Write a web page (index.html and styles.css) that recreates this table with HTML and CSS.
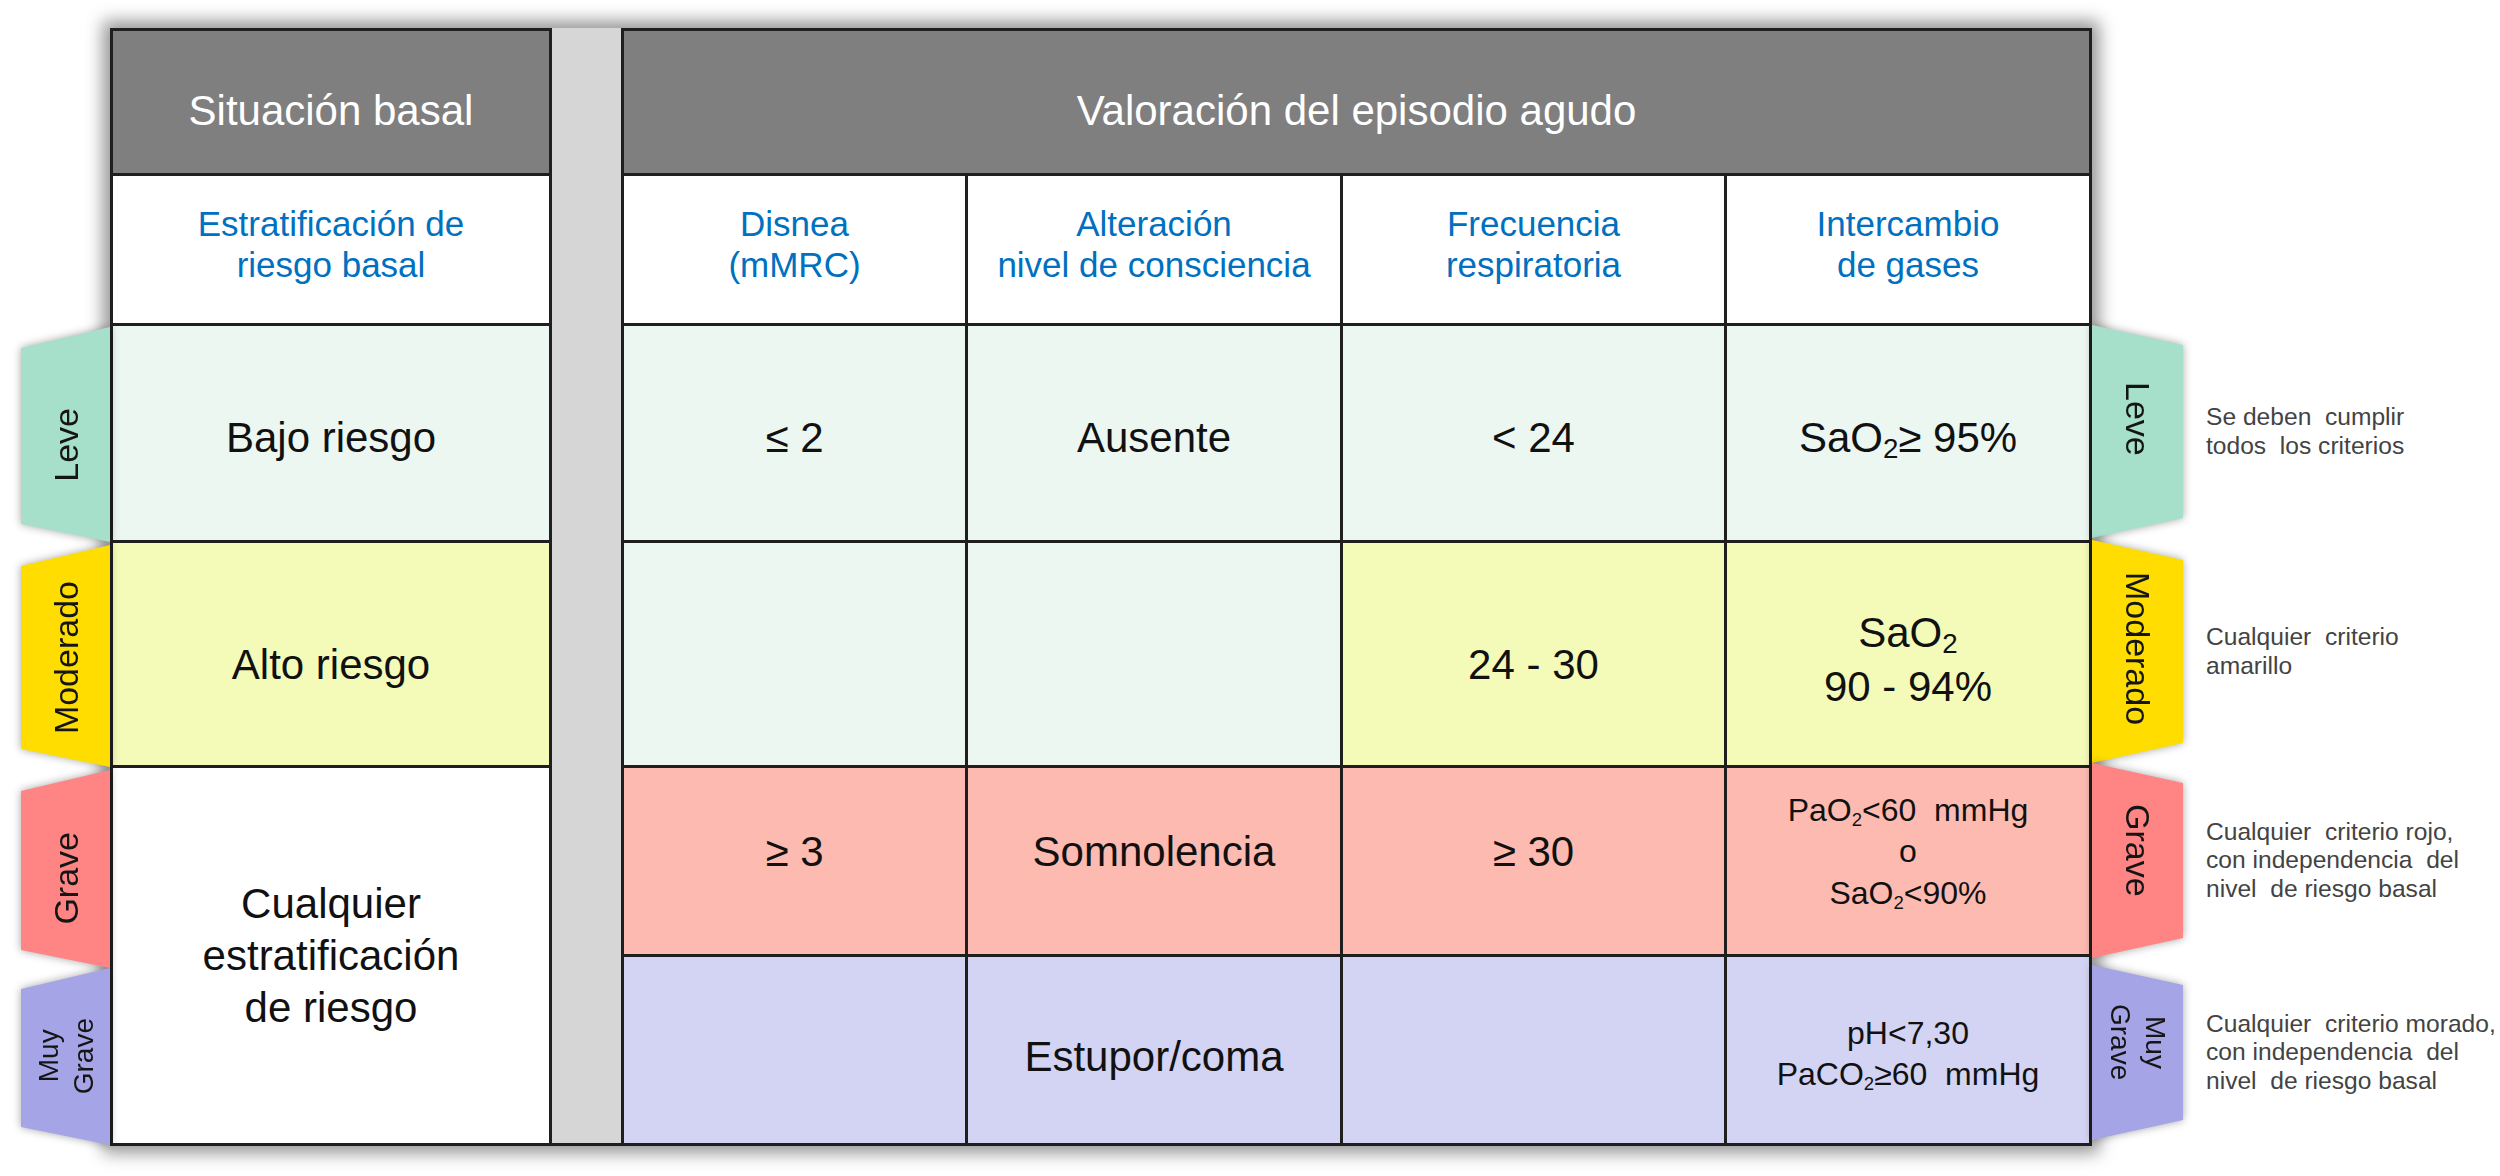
FILE: index.html
```html
<!DOCTYPE html>
<html lang="es">
<head>
<meta charset="utf-8">
<title>Valoración del episodio agudo</title>
<link rel="stylesheet" href="styles.css">
</head>
<body>
<div class="page">
  <div class="tabs-left">
    <div class="ltab ltab-leve"><span class="ltext">Leve</span></div>
    <div class="ltab ltab-mod"><span class="ltext">Moderado</span></div>
    <div class="ltab ltab-grave"><span class="ltext">Grave</span></div>
    <div class="ltab ltab-muy"><span class="ltext small">Muy<br>Grave</span></div>
  </div>

  <div class="table">
    <div class="cell head"><span>Situación basal</span></div>
    <div class="sep"></div>
    <div class="cell head span-val"><span>Valoración del episodio agudo</span></div>

    <div class="cell sub"><span>Estratificación de<br>riesgo basal</span></div>
    <div class="cell sub"><span>Disnea<br>(mMRC)</span></div>
    <div class="cell sub"><span>Alteración<br>nivel de consciencia</span></div>
    <div class="cell sub"><span>Frecuencia<br>respiratoria</span></div>
    <div class="cell sub"><span>Intercambio<br>de gases</span></div>

    <div class="cell bg-leve r1"><span>Bajo riesgo</span></div>
    <div class="cell bg-leve r1"><span>≤ 2</span></div>
    <div class="cell bg-leve r1"><span>Ausente</span></div>
    <div class="cell bg-leve r1"><span>&lt; 24</span></div>
    <div class="cell bg-leve r1"><span>SaO<sub>2</sub>≥ 95%</span></div>

    <div class="cell bg-mod r2"><span>Alto riesgo</span></div>
    <div class="cell bg-leve"></div>
    <div class="cell bg-leve"></div>
    <div class="cell bg-mod r2"><span>24 - 30</span></div>
    <div class="cell bg-mod two inter-mod"><span>SaO<sub>2</sub><br>90 - 94%</span></div>

    <div class="cell bg-white merged"><span>Cualquier<br>estratificación<br>de riesgo</span></div>
    <div class="cell bg-grave r3"><span>≥ 3</span></div>
    <div class="cell bg-grave r3"><span>Somnolencia</span></div>
    <div class="cell bg-grave r3"><span>≥ 30</span></div>
    <div class="cell bg-grave r3 gas"><span>PaO<sub>2</sub>&lt;60&nbsp; mmHg<br>o<br>SaO<sub>2</sub>&lt;90%</span></div>

    <div class="cell bg-muy"></div>
    <div class="cell bg-muy r4"><span>Estupor/coma</span></div>
    <div class="cell bg-muy"></div>
    <div class="cell bg-muy gas inter-muy"><span>pH&lt;7,30<br>PaCO<sub>2</sub>≥60&nbsp; mmHg</span></div>
  </div>

  <div class="side">
    <div class="side-row row-leve">
      <div class="rwrap"><div class="rtab rtab-leve"><span class="rtext">Leve</span></div></div>
      <div class="note">Se deben&nbsp; cumplir<br>todos&nbsp; los criterios</div>
    </div>
    <div class="side-row row-mod">
      <div class="rwrap"><div class="rtab rtab-mod"><span class="rtext">Moderado</span></div></div>
      <div class="note">Cualquier&nbsp; criterio<br>amarillo</div>
    </div>
    <div class="side-row row-grave">
      <div class="rwrap"><div class="rtab rtab-grave"><span class="rtext">Grave</span></div></div>
      <div class="note">Cualquier&nbsp; criterio rojo,<br>con independencia&nbsp; del<br>nivel&nbsp; de riesgo basal</div>
    </div>
    <div class="side-row row-muy">
      <div class="rwrap"><div class="rtab rtab-muy"><span class="rtext small">Muy<br>Grave</span></div></div>
      <div class="note">Cualquier&nbsp; criterio morado,<br>con independencia&nbsp; del<br>nivel&nbsp; de riesgo basal</div>
    </div>
  </div>
</div>
</body>
</html>
```

FILE: styles.css
```css
* { box-sizing: border-box; }

html, body {
  margin: 0;
  padding: 0;
  background: #ffffff;
  overflow: hidden;
}

body {
  font-family: "Liberation Sans", Arial, sans-serif;
  color: #111111;
}

.page {
  display: flex;
  align-items: flex-start;
  width: 2500px;
  height: 1176px;
  padding: 28px 0 0 21px;
}

/* ---------- left tabs ---------- */
.tabs-left {
  display: flex;
  flex-direction: column;
  width: 89px;
  flex: none;
  filter: drop-shadow(0 0 4px rgba(0, 0, 0, 0.35));
}

.ltab {
  display: flex;
  align-items: center;
  justify-content: center;
  width: 89px;
  clip-path: polygon(0 21px, 100% 0, 100% 100%, 0 calc(100% - 18px));
}

.ltab-leve  { margin-top: 299px; height: 215px; background: #a7e0ca; padding-top: 20px; }
.ltab-mod   { margin-top: 3px;   height: 222px; background: #ffdd00; padding-top: 4px; }
.ltab-grave { margin-top: 3px;   height: 198px; background: #ff8585; padding-top: 18px; }
.ltab-muy   { margin-top: 0;     height: 177px; background: #a4a4e6; }

.ltext {
  writing-mode: vertical-rl;
  transform: rotate(180deg);
  font-size: 34px;
  line-height: 36px;
  text-align: center;
  color: #151515;
  white-space: nowrap;
}

.ltext.small,
.rtext.small {
  font-size: 28px;
  line-height: 35px;
}

/* ---------- table ---------- */
.table {
  flex: none;
  display: grid;
  grid-template-columns: 436px 69px 341px 372px 381px 362px;
  grid-template-rows: 142px 147px 214px 222px 186px 186px;
  gap: 3px;
  padding: 3px;
  background: #1f1f1f;
  box-shadow: 0 0 16px 7px rgba(0, 0, 0, 0.42);
}

.sep {
  grid-column: 2;
  grid-row: 1 / -1;
  background: #d6d6d6;
  margin-top: -3px;
}

.cell {
  display: flex;
  align-items: center;
  justify-content: center;
  text-align: center;
  font-size: 42px;
  line-height: 1.15;
  background: #ffffff;
  white-space: nowrap;
}

.head {
  background: #7f7f7f;
  color: #ffffff;
  padding-top: 18px;
}

.span-val { grid-column: 3 / 7; }

.sub {
  color: #0070c0;
  font-size: 35px;
  line-height: 41px;
  padding-bottom: 12px;
}

.bg-leve  { background: #ecf7f1; }
.bg-mod   { background: #f4fbb9; }
.bg-grave { background: #fdbab0; }
.bg-muy   { background: #d3d3f3; }
.bg-white { background: #ffffff; }

.r1 { padding-top: 10px; }
.r2 { padding-top: 22px; }
.r3 { padding-bottom: 18px; }
.r4 { padding-top: 14px; }

.two { line-height: 54px; }
.inter-mod { padding-top: 11px; }

.merged {
  grid-row: span 2;
  line-height: 52px;
}

.gas {
  font-size: 32px;
  line-height: 41.5px;
}
.inter-muy { padding-top: 8px; }

sub {
  font-size: 0.66em;
  vertical-align: -0.22em;
  line-height: 0;
}

.gas sub {
  font-size: 0.58em;
  vertical-align: -0.28em;
}

/* ---------- right side ---------- */
.side {
  flex: none;
  display: flex;
  flex-direction: column;
}

.side-row {
  display: flex;
  align-items: center;
}

.row-leve  { margin-top: 297px; height: 213px; }
.row-mod   { margin-top: 2px;   height: 223px; }
.row-grave { margin-top: 0;     height: 195px; }
.row-muy   { margin-top: 7px;   height: 175px; }

.rwrap {
  flex: none;
  width: 91px;
  height: 100%;
  filter: drop-shadow(0 0 4px rgba(0, 0, 0, 0.35));
}

.rtab {
  display: flex;
  align-items: center;
  justify-content: center;
  width: 91px;
  height: 100%;
  clip-path: polygon(0 0, 100% 20px, 100% calc(100% - 20px), 0 100%);
}

.rtab-leve  { background: #a7e0ca; padding-bottom: 26px; }
.rtab-mod   { background: #ffdd00; padding-bottom: 6px; }
.rtab-grave { background: #ff8585; padding-bottom: 20px; }
.rtab-muy   { background: #a4a4e6; padding-bottom: 20px; }

.rtext {
  writing-mode: vertical-rl;
  font-size: 34px;
  line-height: 36px;
  text-align: center;
  color: #151515;
  white-space: nowrap;
}

.note {
  margin-left: 23px;
  font-size: 24.6px;
  line-height: 28.5px;
  color: #434343;
  white-space: nowrap;
}
```
